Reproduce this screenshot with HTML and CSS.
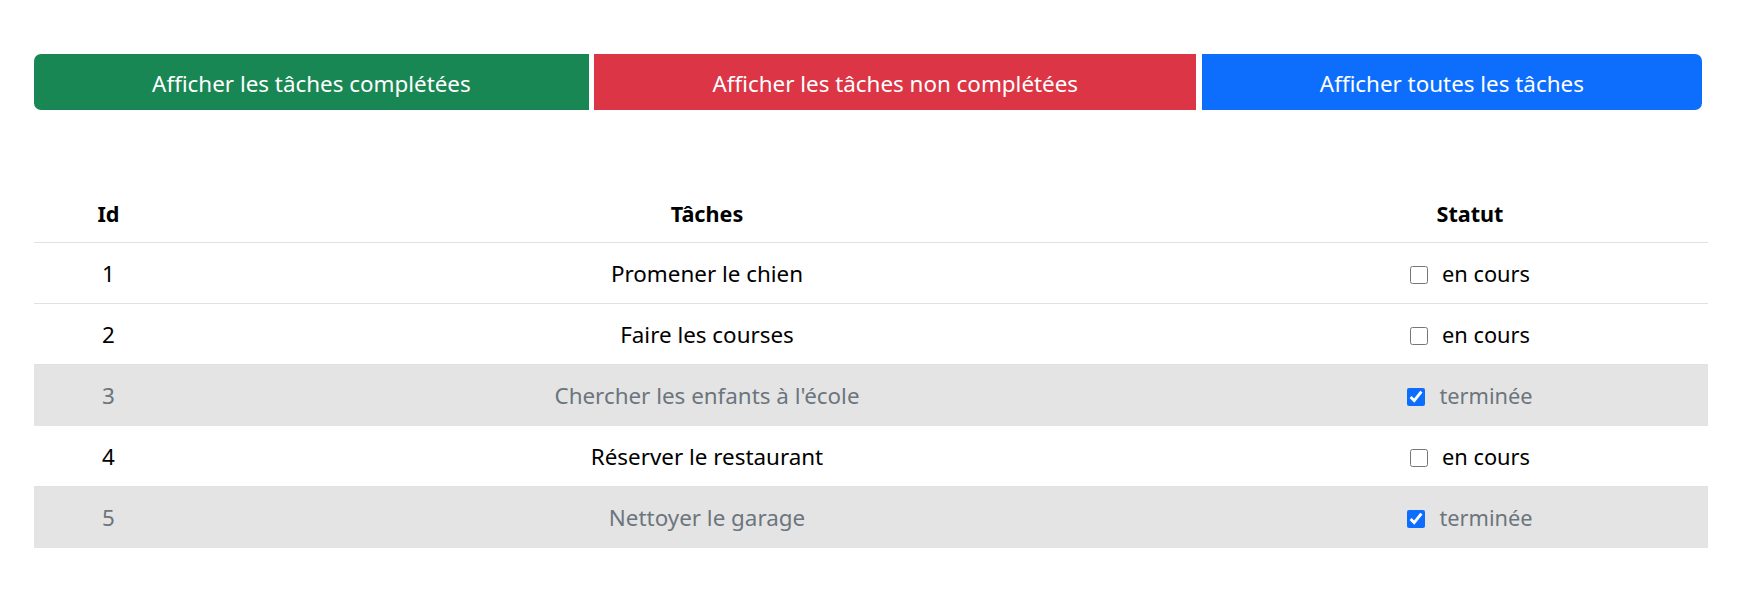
FILE: index.html
```html
<!DOCTYPE html>
<html lang="fr">
<head>
<meta charset="utf-8">
<title>Tâches</title>
<link rel="stylesheet" href="styles.css">
</head>
<body>
<main class="page">
  <div class="filters">
    <button class="btn btn-green">Afficher les tâches complétées</button>
    <button class="btn btn-red">Afficher les tâches non complétées</button>
    <button class="btn btn-blue">Afficher toutes les tâches</button>
  </div>

  <table class="tasks">
    <colgroup>
      <col class="col-id">
      <col class="col-task">
      <col class="col-status">
    </colgroup>
    <thead>
      <tr><th class="c-id">Id</th><th>Tâches</th><th class="c-status">Statut</th></tr>
    </thead>
    <tbody>
      <tr>
        <td class="c-id">1</td><td>Promener le chien</td>
        <td class="c-status"><label class="status"><input type="checkbox"><span>en cours</span></label></td>
      </tr>
      <tr>
        <td class="c-id">2</td><td>Faire les courses</td>
        <td class="c-status"><label class="status"><input type="checkbox"><span>en cours</span></label></td>
      </tr>
      <tr class="done">
        <td class="c-id">3</td><td>Chercher les enfants à l'école</td>
        <td class="c-status"><label class="status"><input type="checkbox" checked><span>terminée</span></label></td>
      </tr>
      <tr>
        <td class="c-id">4</td><td>Réserver le restaurant</td>
        <td class="c-status"><label class="status"><input type="checkbox"><span>en cours</span></label></td>
      </tr>
      <tr class="done">
        <td class="c-id">5</td><td>Nettoyer le garage</td>
        <td class="c-status"><label class="status"><input type="checkbox" checked><span>terminée</span></label></td>
      </tr>
    </tbody>
  </table>
</main>
</body>
</html>
```
FILE: styles.css
```css
html, body {
  margin: 0;
  padding: 0;
  background: #ffffff;
}

body {
  font-family: "Noto Sans", "Open Sans", sans-serif;
  color: #000000;
}

.page {
  padding: 54px 40px 0 34px;
}

.filters {
  display: flex;
  gap: 5.5px;
  width: 1668px;
}

.btn {
  flex: 1 1 auto;
  box-sizing: border-box;
  height: 56px;
  padding: 3px 0 0;
  border: 0;
  border-radius: 0;
  font-family: "Noto Sans", "Open Sans", sans-serif;
  font-size: 22.4px;
  line-height: 53px;
  color: #ffffff;
  cursor: pointer;
}

.btn-green {
  background: #198754;
  border-radius: 7px 0 0 7px;
}

.btn-red {
  background: #dc3545;
}

.btn-blue {
  background: #0d6efd;
  border-radius: 0 7px 7px 0;
}

.tasks {
  margin-top: 72px;
  width: 1674px;
  border-collapse: collapse;
  table-layout: fixed;
}

.col-id { width: 143px; }
.col-task { width: 1060px; }
.col-status { width: 471px; }

.tasks th,
.tasks td {
  text-align: center;
  border-bottom: 1px solid #dee2e6;
  line-height: 32px;
  padding: 15px 8px 13px;
  font-size: 22.4px;
  white-space: nowrap;
}

.tasks th {
  font-size: 21.6px;
  font-weight: 700;
  padding-top: 16px;
  padding-bottom: 12px;
}

.tasks .c-id {
  padding-left: 11px;
  padding-right: 5px;
}

.tasks .c-status {
  padding-left: 6px;
  padding-right: 11px;
}

.tasks tr.done td {
  background: #e4e4e4;
  border-bottom-color: #e4e4e4;
  color: #6c757d;
}

.status {
  display: inline-flex;
  align-items: center;
  gap: 14px;
  font-size: 21.8px;
  vertical-align: top;
  height: 32px;
}

.status input {
  margin: 1px 0 0 0;
  width: 18px;
  height: 18px;
  accent-color: #0d6efd;
}
```
